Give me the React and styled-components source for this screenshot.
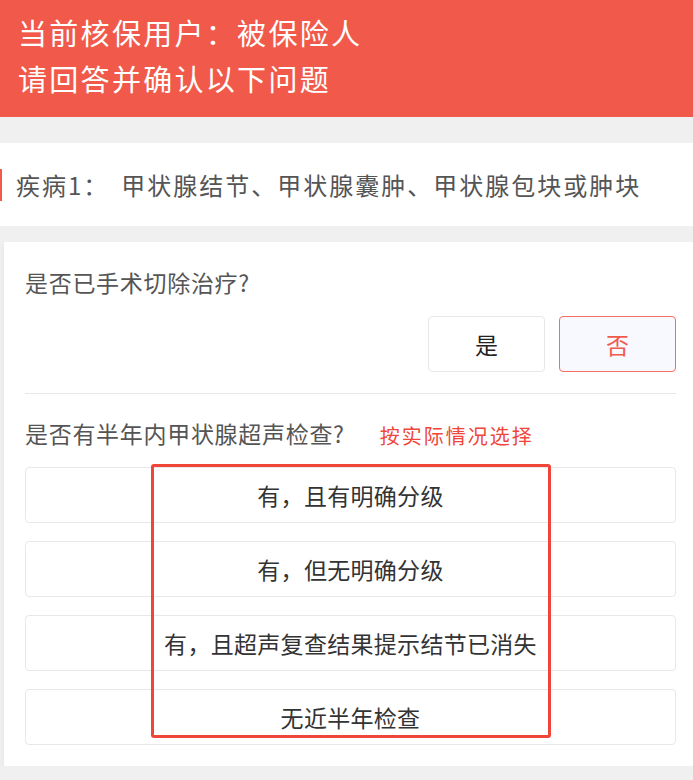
import React from 'react';
import styled, { createGlobalStyle } from 'styled-components';

const GlobalStyle = createGlobalStyle`
	body {
		margin: 0;
		background: #F0F0F0;
		font-family: "Noto Sans CJK SC", "Noto Sans", sans-serif;
	}
`;

const Header = styled.div`
	background: #F15A4B;
	color: #FFFFFF;
	height: 117px;
	box-sizing: border-box;
	padding: 9px 18px 0 18px;
	font-size: 29px;
	letter-spacing: 2.3px;
	line-height: 46px;
`;

const Disease = styled.div`
	margin-top: 26px;
	background: #FFFFFF;
	height: 83px;
	display: flex;
	align-items: center;
	color: #555555;
	font-size: 24px;
	letter-spacing: 2px;

	.label{
		margin-right: 12px;
	}
`;

const Marker = styled.span`
	width: 2px;
	height: 32px;
	background: #F15A4B;
	margin-right: 14px;
`;

const Card = styled.div`
	margin: 16px 0 0 4px;
	background: #FFFFFF;
	padding: 24px 17px 21px 21px;
	box-shadow: 0 3px 6px rgba(0, 0, 0, 0.05);
`;

const Question = styled.div`
	color: #555555;
	font-size: 23px;
	letter-spacing: 0.7px;
	height: 32px;
	line-height: 32px;
	display: flex;
	align-items: center;
	margin-top: ${props => props.first ? '0' : '23px'};
`;

const Hint = styled.span`
	color: #F0463A;
	font-size: 20px;
	letter-spacing: 2px;
	margin-left: 35px;
	margin-top: 5px;
`;

const Choices = styled.div`
	display: flex;
	justify-content: flex-end;
	gap: 14px;
	margin-top: 18px;
`;

const Choice = styled.div`
	width: 117px;
	height: 56px;
	box-sizing: border-box;
	border-radius: 4px;
	display: flex;
	align-items: center;
	justify-content: center;
	font-size: 23px;
	border: 1px solid ${props => props.active ? '#F36E62' : '#E5E8EA'};
	background: ${props => props.active ? '#F8F8FF' : '#FFFFFF'};
	color: ${props => props.active ? '#F15A4B' : '#222222'};
`;

const Divider = styled.div`
	height: 1px;
	background: #E8E8E8;
	margin-top: 21px;
`;

const Options = styled.div`
	position: relative;
	display: flex;
	flex-direction: column;
	gap: 18px;
	margin-top: 18px;
`;

const Option = styled.div`
	height: 56px;
	box-sizing: border-box;
	border: 1px solid #E8E8E8;
	border-radius: 4px;
	display: flex;
	align-items: center;
	justify-content: center;
	color: #333333;
	font-size: 23px;
	letter-spacing: 0.3px;
`;

const Highlight = styled.div`
	position: absolute;
	left: 126px;
	top: -3px;
	width: 400px;
	height: 274px;
	box-sizing: border-box;
	border: 3px solid #F0463A;
	border-radius: 3px;
	pointer-events: none;
`;

const options = [
	'有，且有明确分级',
	'有，但无明确分级',
	'有，且超声复查结果提示结节已消失',
	'无近半年检查'
];

function App() {
	return (
		<>
			<GlobalStyle />
			<Header>
				<div>当前核保用户：被保险人</div>
				<div>请回答并确认以下问题</div>
			</Header>

			<Disease>
				<Marker />
				<span className="label">疾病1：</span>
				<span>甲状腺结节、甲状腺囊肿、甲状腺包块或肿块</span>
			</Disease>

			<Card>
				<Question first>是否已手术切除治疗?</Question>
				<Choices>
					<Choice>是</Choice>
					<Choice active>否</Choice>
				</Choices>
				<Divider />

				<Question>
					是否有半年内甲状腺超声检查?
					<Hint>按实际情况选择</Hint>
				</Question>
				<Options>
					{options.map(text => (
						<Option key={text}>{text}</Option>
					))}
					<Highlight />
				</Options>
			</Card>
		</>
	)
}

export default App
